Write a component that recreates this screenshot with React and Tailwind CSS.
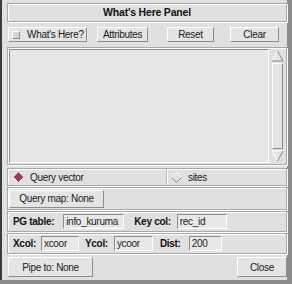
import React from 'react';

const raised = 'border border-t-white border-l-white border-r-[#8c8c8c] border-b-[#8c8c8c]';
const sunken = 'border border-t-[#8c8c8c] border-l-[#8c8c8c] border-r-white border-b-white';
const groove = 'border border-[#a8a8a8] shadow-[inset_1px_1px_0_#ffffff,1px_1px_0_#ffffff]';

const Btn = ({ children, className = '' }) => (
  <div className={`${raised} bg-[#e4e4e4] flex items-center justify-center text-[10px] tracking-[-0.3px] text-[#1a1a1a] whitespace-nowrap ${className}`}>
    {children}
  </div>
);

const Field = ({ value, className = '' }) => (
  <div className={`${sunken} bg-[#e8e8e8] h-[15px] flex items-center pl-[2px] text-[10px] tracking-[-0.3px] font-normal text-[#222] ${className}`}>
    {value}
  </div>
);

const Diamond = ({ on }) => (
  <svg width="11" height="11" viewBox="0 0 11 11">
    <polygon points="5.5,0.5 10.5,5.5 5.5,10.5 0.5,5.5" fill={on ? '#b03060' : '#e0e0e0'} />
    <polyline points="0.5,5.5 5.5,0.5 10.5,5.5" fill="none" stroke={on ? '#7a7a7a' : '#ffffff'} strokeWidth="1" />
    <polyline points="0.5,5.5 5.5,10.5 10.5,5.5" fill="none" stroke={on ? '#ffffff' : '#8c8c8c'} strokeWidth="1" />
  </svg>
);

export default function App() {
  return (
    <div className="w-[292px] h-[284px] bg-[#8a8a8a] flex" style={{ fontFamily: '"Liberation Sans", Arial, sans-serif' }}>
      <div className="mr-[5px] mb-[4px] flex-1 bg-[#e0e0e0] flex flex-col border-l-2 border-l-[#3c3c3c]">
        {/* title */}
        <div className={`mt-[3px] ml-[5px] h-[19px] ${groove} flex items-center justify-center text-[10.5px] tracking-[-0.2px] font-bold text-[#111]`}>
          What's Here Panel
        </div>

        {/* button row */}
        <div className="mt-[5px] h-[15px] flex items-center">
          <Btn className="ml-[6px] w-[79px] h-[15px] justify-start pl-[3px] gap-[7px]">
            <span className={`${raised} w-[8px] h-[8px] bg-[#d4d4d4]`} />
            <span>What's Here?</span>
          </Btn>
          <Btn className="ml-[10px] w-[51px] h-[15px]">Attributes</Btn>
          <Btn className="ml-[19px] w-[47px] h-[15px]">Reset</Btn>
          <Btn className="ml-[16px] w-[49px] h-[15px]">Clear</Btn>
        </div>

        {/* text area + scrollbar */}
        <div className={`mt-[5px] ml-[5px] h-[118px] ${groove} flex p-[1px]`}>
          <div className={`flex-1 ${sunken} bg-[#e6e6e6]`} />
          <div className="w-[16px] flex flex-col items-center pl-[1px] bg-[#e0e0e0]">
            <svg width="13" height="12" viewBox="0 0 13 12" className="mt-[1px]">
              <polygon points="6.5,1 12,11 1,11" fill="#e4e4e4" />
              <polyline points="1,11 6.5,1" stroke="#ffffff" fill="none" />
              <polyline points="6.5,1 12,11 1,11" stroke="#8c8c8c" fill="none" />
            </svg>
            <div className={`${raised} flex-1 w-[11px] my-[1px] bg-[#e4e4e4]`} />
            <svg width="13" height="12" viewBox="0 0 13 12" className="mb-[1px]">
              <polygon points="1,1 12,1 6.5,11" fill="#e4e4e4" />
              <polyline points="12,1 1,1 6.5,11" stroke="#ffffff" fill="none" />
              <polyline points="6.5,11 12,1" stroke="#8c8c8c" fill="none" />
            </svg>
          </div>
        </div>

        {/* radio row */}
        <div className={`mt-[3px] ml-[5px] h-[18px] ${groove} flex text-[10px] tracking-[-0.3px] text-[#1a1a1a]`}>
          <div className="w-[159px] flex items-center gap-[6px] pl-[5px] border-r border-r-[#b8b8b8]">
            <Diamond on />
            <span>Query vector</span>
          </div>
          <div className="flex items-center gap-[6px] pl-[3px] border-l border-l-white">
            <Diamond />
            <span>sites</span>
          </div>
        </div>

        {/* query map */}
        <div className={`mt-[1px] ml-[5px] h-[23px] ${groove} flex items-center`}>
          <Btn className="ml-[1px] w-[95px] h-[18px]">Query map: None</Btn>
        </div>

        {/* PG table */}
        <div className={`mt-[1px] ml-[5px] h-[21px] ${groove} flex items-center text-[10px] tracking-[-0.3px] text-[#111]`}>
          <span className="ml-[5px] font-bold">PG table:</span>
          <Field value="info_kuruma" className="ml-[9px] w-[61px]" />
          <span className="ml-[10px] font-bold">Key col:</span>
          <Field value="rec_id" className="ml-[6px] w-[50px]" />
        </div>

        {/* Xcol row */}
        <div className={`mt-[1px] ml-[5px] h-[21px] ${groove} flex items-center text-[10px] tracking-[-0.3px] text-[#111]`}>
          <span className="ml-[5px] font-bold">Xcol:</span>
          <Field value="xcoor" className="ml-[5px] w-[38px]" />
          <span className="ml-[6px] font-bold">Ycol:</span>
          <Field value="ycoor" className="ml-[6px] w-[39px]" />
          <span className="ml-[7px] font-bold">Dist:</span>
          <Field value="200" className="ml-[8px] w-[33px]" />
        </div>

        {/* bottom buttons */}
        <div className="mt-[2px] ml-[5px] flex-1 flex items-start justify-between pt-[1px]">
          <Btn className="ml-[1px] w-[85px] h-[20px]">Pipe to: None</Btn>
          <Btn className="w-[50px] h-[20px]">Close</Btn>
        </div>
      </div>
    </div>
  );
}
